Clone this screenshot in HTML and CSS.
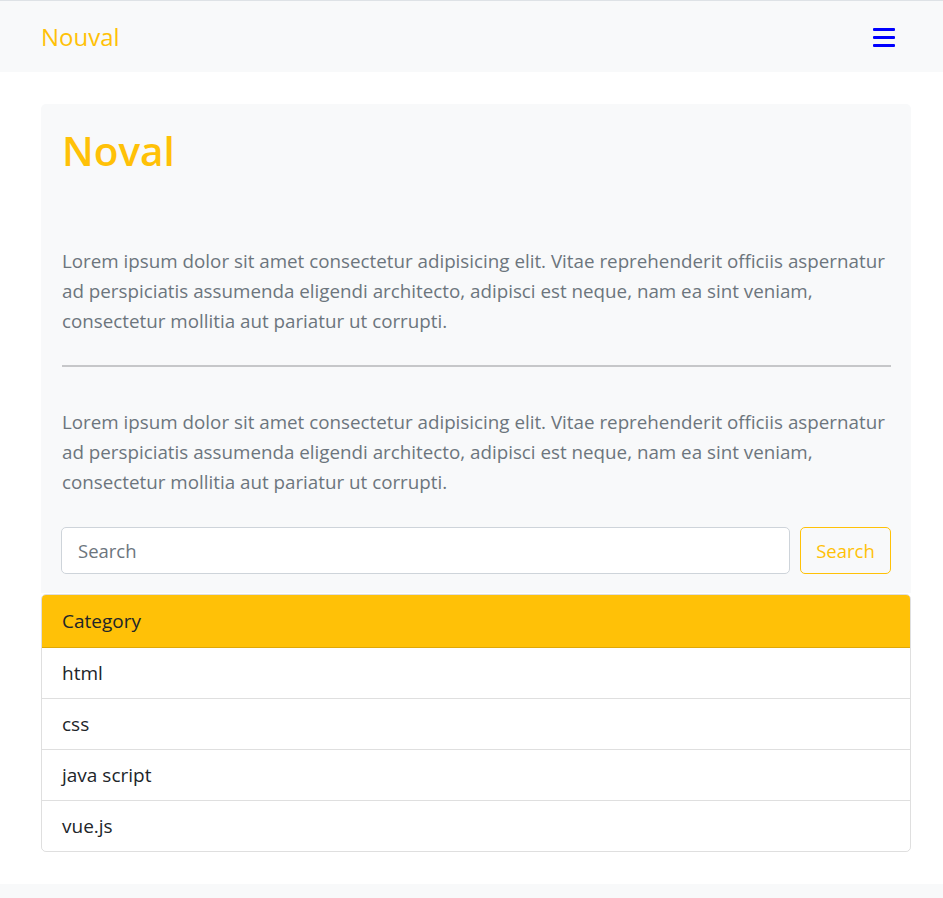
FILE: index.html
```html
<!DOCTYPE html>
<html lang="en">
<head>
<meta charset="utf-8">
<title>Nouval</title>
<link rel="stylesheet" href="styles.css">
</head>
<body>
<nav class="navbar">
  <a class="brand" href="#">Nouval</a>
  <button class="toggler" aria-label="Toggle navigation">
    <svg width="22" height="20" viewBox="0 0 22 20"><rect x="0" y="1" width="22" height="3" rx="1" fill="#0000ff"/><rect x="0" y="9" width="22" height="3" rx="1" fill="#0000ff"/><rect x="0" y="17" width="22" height="3" rx="1" fill="#0000ff"/></svg>
  </button>
</nav>
<main class="container">
  <section class="jumbo">
    <h1 class="title">Noval</h1>
    <p class="lead">Lorem ipsum dolor sit amet consectetur adipisicing elit. Vitae reprehenderit officiis aspernatur ad perspiciatis assumenda eligendi architecto, adipisci est neque, nam ea sint veniam, consectetur mollitia aut pariatur ut corrupti.</p>
    <hr class="rule">
    <p class="lead lead-2">Lorem ipsum dolor sit amet consectetur adipisicing elit. Vitae reprehenderit officiis aspernatur ad perspiciatis assumenda eligendi architecto, adipisci est neque, nam ea sint veniam, consectetur mollitia aut pariatur ut corrupti.</p>
    <form class="search">
      <input class="search-input" type="text" placeholder="Search">
      <button class="search-btn" type="button">Search</button>
    </form>
  </section>
  <div class="card">
    <div class="card-header">Category</div>
    <ul class="list">
      <li class="item">html</li>
      <li class="item">css</li>
      <li class="item">java script</li>
      <li class="item">vue.js</li>
    </ul>
  </div>
</main>
<footer class="footer"></footer>
</body>
</html>
```
FILE: styles.css
```css
* { box-sizing: border-box; }
html, body { margin: 0; padding: 0; }
body {
  font-family: "Open Sans", "Noto Sans", sans-serif;
  color: #212529;
  background: #fff;
}
.navbar {
  border-top: 1px solid #dee2e6;
  height: 72px;
  background: #f8f9fa;
  display: flex;
  align-items: center;
  justify-content: space-between;
  padding: 0 48px 0 41px;
}
.brand {
  color: #ffc107;
  font-size: 24px;
  text-decoration: none;
  line-height: 1;
}
.toggler {
  border: 0;
  background: transparent;
  padding: 0;
  display: flex;
  margin-top: 1px;
}
.container {
  padding: 32px 32px 0 41px;
}
.jumbo {
  background: #f8f9fa;
  border-radius: 5px 5px 0 0;
  padding: 20px 20px 19px 21px;
}
.title {
  margin: 0 0 69px;
  font-size: 40.5px;
  line-height: 53px;
  font-weight: 600;
  color: #ffc107;
}
.lead {
  margin: 0;
  font-size: 18.8px;
  line-height: 30px;
  color: #6c757d;
}
.rule {
  margin: 29px 0 40px;
  border: 0;
  border-top: 2px solid #c6c7c9;
}
.search {
  margin-top: 30px;
  display: flex;
  gap: 10px;
}
.search-input {
  flex: 1;
  height: 47px;
  border: 1px solid #ced4da;
  border-radius: 5px;
  background: #fff;
  padding: 0 16px;
  font: inherit;
  font-size: 18.5px;
  color: #495057;
  margin-left: -1px;
}
.search-input::placeholder { color: #6c757d; }
.search-btn {
  width: 91px;
  height: 47px;
  border: 1px solid #ffc107;
  border-radius: 5px;
  background: transparent;
  color: #ffc107;
  font: inherit;
  font-size: 18.5px;
}
.card {
  margin-top: 1px;
  margin-bottom: 32px;
  border: 1px solid rgba(0,0,0,.125);
  border-radius: 5px;
  overflow: hidden;
}
.card-header {
  background: #ffc107;
  border-bottom: 1px solid rgba(0,0,0,.125);
  height: 53px;
  padding: 0 20px;
  display: flex;
  align-items: center;
  font-size: 19px;
}
.list { list-style: none; margin: 0; padding: 0; }
.item {
  height: 51px;
  display: flex;
  align-items: center;
  padding: 0 20px;
  font-size: 19px;
  border-top: 1px solid rgba(0,0,0,.125);
}
.item:first-child { border-top: 0; height: 50px; }
.footer {
  height: 14px;
  background: #f8f9fa;
}
```
